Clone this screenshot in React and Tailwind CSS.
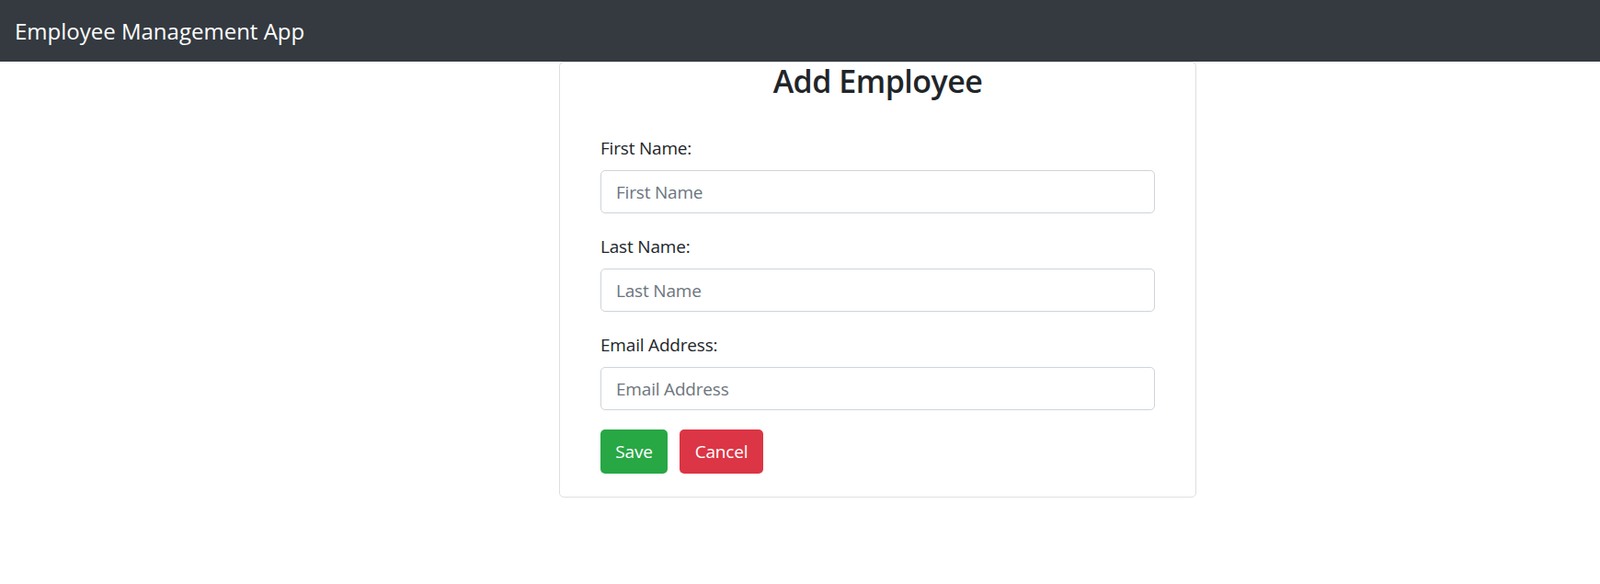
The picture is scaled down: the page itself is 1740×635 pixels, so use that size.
export default function App() {
  const font = { fontFamily: '"Open Sans", "Noto Sans", sans-serif' };
  const fields = [
    { label: "First Name:", ph: "First Name" },
    { label: "Last Name:", ph: "Last Name" },
    { label: "Email Address:", ph: "Email Address" },
  ];
  return (
    <div className="min-h-[635px] bg-white text-[#212529]" style={font}>
      <header className="h-[67px] bg-[#343a40] flex items-center pl-[16px]">
        <span className="text-white text-[24px] leading-[30px]">Employee Management App</span>
      </header>
      <div className="ml-[608px] w-[693px] border border-[#dfdfdf] rounded-[5px] px-[44px] pb-[25px]">
        <h3 className="text-center text-[34px] leading-[40px] font-semibold tracking-[-0.015em] text-[#212529]">Add Employee</h3>
        <form className="mt-[39px]">
          {fields.map((f, i) => (
            <div key={i} className="mb-[22px]">
              <label className="block text-[19px] leading-[29px] tracking-[-0.01em] text-[#212529]">{f.label}</label>
              <input
                type="text"
                placeholder={f.ph}
                className="mt-[9px] block w-full h-[47px] border border-[#ced4da] rounded-[5px] pl-[16px] text-[19px] tracking-[-0.01em] placeholder:text-[#6c757d] outline-none"
                style={font}
              />
            </div>
          ))}
          <div className="flex gap-[13px] mt-[-1px]">
            <button type="button" className="w-[73px] h-[48px] rounded-[5px] bg-[#28a745] text-white text-[19px] tracking-[-0.01em]" style={font}>Save</button>
            <button type="button" className="w-[91px] h-[48px] rounded-[5px] bg-[#dc3545] text-white text-[19px] tracking-[-0.01em]" style={font}>Cancel</button>
          </div>
        </form>
      </div>
    </div>
  );
}
